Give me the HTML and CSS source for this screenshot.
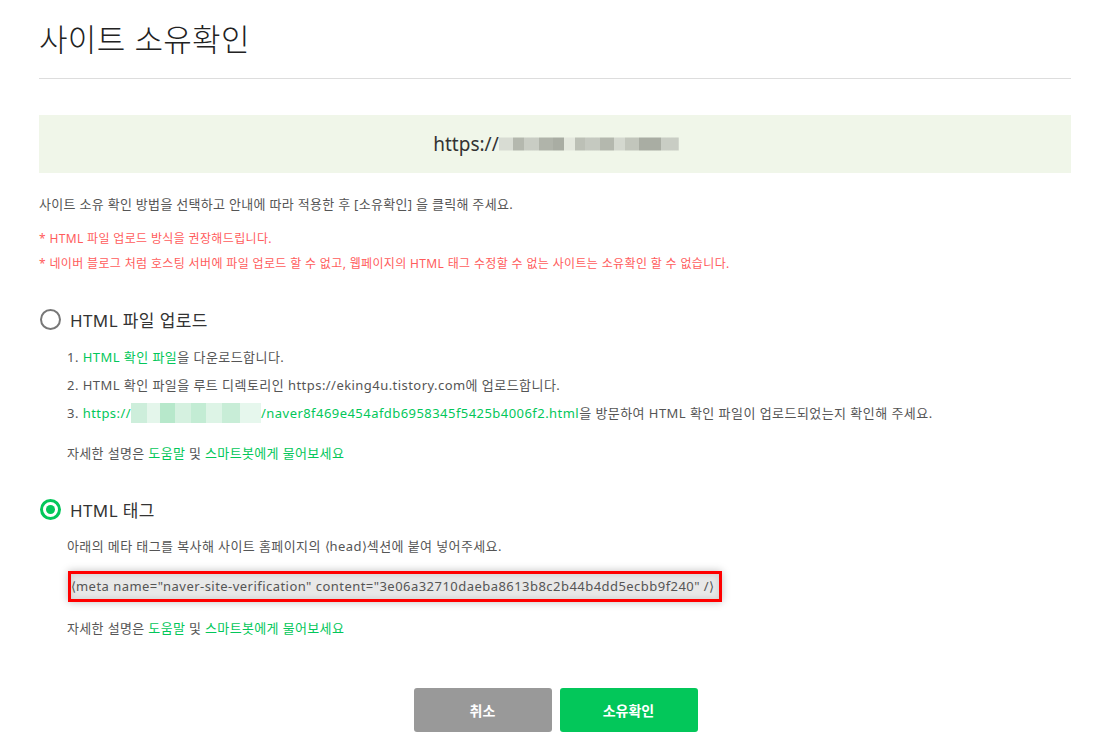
FILE: index.html
```html
<!DOCTYPE html>
<html lang="ko">
<head>
<meta charset="utf-8">
<link rel="stylesheet" href="styles.css">
</head>
<body>
<div class="page">
  <h1 class="title">사이트 소유확인</h1>
  <div class="urlbox"><span>https://</span><span class="blur gray"></span></div>
  <p class="desc">사이트 소유 확인 방법을 선택하고 안내에 따라 적용한 후 [소유확인] 을 클릭해 주세요.</p>
  <p class="warn first">* HTML 파일 업로드 방식을 권장해드립니다.</p>
  <p class="warn">* 네이버 블로그 처럼 호스팅 서버에 파일 업로드 할 수 없고, 웹페이지의 HTML 태그 수정할 수 없는 사이트는 소유확인 할 수 없습니다.</p>

  <div class="option">
    <div class="opt-head"><span class="radio"></span><span class="opt-label">HTML 파일 업로드</span></div>
    <ol class="steps">
      <li>1. <a class="g">HTML 확인 파일</a>을 다운로드합니다.</li>
      <li>2. HTML 확인 파일을 루트 디렉토리인 https://eking4u.tistory.com에 업로드합니다.</li>
      <li>3. <a class="g">https://<span class="blur green"></span>/naver8f469e454afdb6958345f5425b4006f2.html</a>을 방문하여 HTML 확인 파일이 업로드되었는지 확인해 주세요.</li>
    </ol>
    <p class="help">자세한 설명은 <a class="g">도움말</a> 및 <a class="g">스마트봇에게 물어보세요</a></p>
  </div>

  <div class="option second">
    <div class="opt-head"><span class="radio on"></span><span class="opt-label">HTML 태그</span></div>
    <p class="sub">아래의 메타 태그를 복사해 사이트 홈페이지의 <span class="ab">⟨</span>head<span class="ab">⟩</span>섹션에 붙여 넣어주세요.</p>
    <div class="meta"><span class="ab">⟨</span>meta name="naver-site-verification" content="3e06a32710daeba8613b8c2b44b4dd5ecbb9f240" /<span class="ab">⟩</span></div>
    <p class="help">자세한 설명은 <a class="g">도움말</a> 및 <a class="g">스마트봇에게 물어보세요</a></p>
  </div>

  <div class="buttons">
    <button class="btn cancel">취소</button>
    <button class="btn ok">소유확인</button>
  </div>
</div>
</body>
</html>
```

FILE: styles.css
```css
* { box-sizing: border-box; }
html, body { margin: 0; padding: 0; background: #fff; }
body {
  font-family: "Noto Sans", "Noto Sans CJK KR", sans-serif;
  color: #555;
}
.page {
  width: 1032px;
  margin-left: 39px;
  padding-top: 14px;
}
.title {
  margin: 0;
  font-family: "Noto Sans CJK KR", sans-serif;
  font-size: 31px;
  font-weight: 300;
  color: #222;
  line-height: 48px;
  padding-bottom: 16px;
  border-bottom: 1px solid #ddd;
  letter-spacing: 0.3px;
}
.urlbox {
  margin-top: 36px;
  height: 58px;
  background: #f0f6e9;
  display: flex;
  align-items: center;
  justify-content: center;
  font-size: 19px;
  color: #333;
  padding-left: 2px;
}
.blur {
  display: inline-block;
  vertical-align: middle;
}
.blur.gray {
  width: 180px;
  height: 22px;
  background:
    linear-gradient(90deg,
      #d8dcd3 0 8%, #b4b8ae 8% 14%, #c9cdc4 14% 22%, #b0b4aa 22% 30%, #a9ada3 30% 36%, #e4e8de 36% 42%,
      #bcc0b6 42% 48%, #c5c9c0 48% 56%, #b4b8ae 56% 64%, #d4d8cf 64% 70%, #c2c6bc 70% 78%, #a9ada3 78% 90%, #c9cdc4 90% 100%);
  clip-path: polygon(0 20%, 100% 20%, 100% 80%, 0 80%);
}
.blur.green {
  width: 130px;
  height: 20px;
  vertical-align: -5px;
  background:
    linear-gradient(90deg,
      #cdeedb 0 12%, #e4f6eb 12% 22%, #b7e8cb 22% 34%, #d5f1e0 34% 46%, #c3ecd4 46% 58%, #ddf4e6 58% 70%,
      #c8edd7 70% 84%, #e6f7ed 84% 100%);
}
.ab {
  font-family: "DejaVu Sans", sans-serif;
  font-weight: 300;
  letter-spacing: 0;
}
.desc {
  margin: 21px 0 0;
  font-size: 13px;
  line-height: 20px;
  color: #555;
  letter-spacing: 0.3px;
}
.warn {
  margin: 5px 0 0;
  font-size: 12px;
  line-height: 20px;
  color: #ff5c5c;
  letter-spacing: 0.35px;
}
.warn.first { margin-top: 15px; }
.option { margin-top: 33px; }
.option.second { margin-top: 34px; }
.opt-head {
  display: flex;
  align-items: center;
  height: 24px;
}
.radio {
  width: 21px;
  height: 21px;
  border-radius: 50%;
  border: 2px solid #777;
  margin-left: 1px;
  display: inline-flex;
  align-items: center;
  justify-content: center;
}
.radio.on { border: 3px solid #03c75a; }
.radio.on::after {
  content: "";
  width: 9px;
  height: 9px;
  border-radius: 50%;
  background: #03c75a;
}
.opt-label {
  margin-left: 9px;
  font-size: 17px;
  color: #333;
  letter-spacing: 0.4px;
}
.steps {
  list-style: none;
  margin: 12px 0 0;
  padding: 0 0 0 28px;
  font-size: 13px;
  line-height: 28px;
  letter-spacing: 0.45px;
}
.g { color: #03c75a; text-decoration: none; }
.help {
  margin: 16px 0 0 28px;
  font-size: 13px;
  line-height: 20px;
  letter-spacing: 0.35px;
}
.sub {
  margin: 15px 0 0 28px;
  font-size: 13px;
  line-height: 20px;
  letter-spacing: 0.4px;
}
.meta {
  margin: 14px 0 0 29px;
  width: 654px;
  height: 31px;
  border: 3px solid #f00;
  background: #e8e8e8;
  box-shadow: 0 0 8px rgba(0,0,0,0.25), inset 0 0 6px rgba(0,0,0,0.12);
  font-size: 13px;
  line-height: 25px;
  padding-left: 0;
  color: #555;
  white-space: nowrap;
  letter-spacing: 0.46px;
}
.second .help { margin-top: 16px; }
.buttons {
  margin-top: 50px;
  display: flex;
  justify-content: center;
  gap: 8px;
  padding-left: 1px;
}
.btn {
  width: 138px;
  height: 44px;
  border: 0;
  border-radius: 3px;
  color: #fff;
  font-family: "Noto Sans CJK KR", sans-serif;
  font-size: 14px;
  font-weight: 700;
}
.cancel { background: #999; }
.ok { background: #03c75a; }
```
